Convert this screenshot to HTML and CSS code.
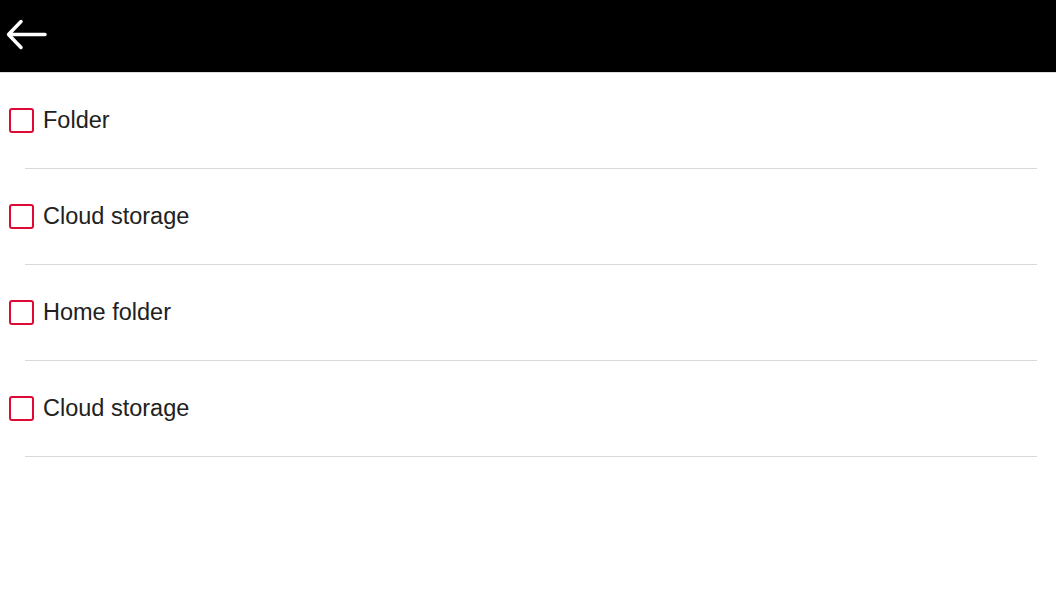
FILE: index.html
```html
<!DOCTYPE html>
<html lang="en">
<head>
    <meta charset="UTF-8">
    <meta name="viewport" content="width=device-width, initial-scale=1.0">
    <title>Locations</title>
    <link rel="stylesheet" href="styles.css">
</head>
<body>
    <div class="topbar">
        <button class="back" aria-label="Back">
            <svg width="44" height="32" viewBox="0 0 44 32">
                <path d="M40 15.5H3.5M16 2.5L3.5 15.5 16 28.5" fill="none" stroke="#fff" stroke-width="3.5" stroke-linecap="round" stroke-linejoin="round"/>
            </svg>
        </button>
    </div>
    <ul class="list">
        <li class="row"><span class="check"></span><span class="label">Folder</span></li>
        <li class="row"><span class="check"></span><span class="label">Cloud storage</span></li>
        <li class="row"><span class="check"></span><span class="label">Home folder</span></li>
        <li class="row"><span class="check"></span><span class="label">Cloud storage</span></li>
    </ul>
</body>
</html>
```

FILE: styles.css
```css
* {margin: 0; padding: 0; box-sizing: border-box;}

body
{
    background: #fff;
    font-family: "Liberation Sans", Arial, sans-serif;
    color: #212121;
}

.topbar
{
    height: 73px;
    background: #000;
    border-bottom: 1px solid #ddd;
    display: flex;
    align-items: center;
    padding-left: 5px;
}

.back
{
    background: none;
    border: none;
    display: flex;
    margin-top: -2px;
}

.list
{
    list-style: none;
}

.row
{
    height: 96px;
    display: flex;
    align-items: center;
    position: relative;
    padding-left: 9px;
    padding-bottom: 1px;
}

.row::after
{
    content: "";
    position: absolute;
    left: 25px;
    right: 19px;
    bottom: 0;
    border-bottom: 1px solid #d9d9d9;
}

.check
{
    width: 25px;
    height: 25px;
    border: 2px solid #dc0a35;
    border-radius: 3px;
    margin-right: 9px;
}

.label
{
    font-size: 23.5px;
}
```
